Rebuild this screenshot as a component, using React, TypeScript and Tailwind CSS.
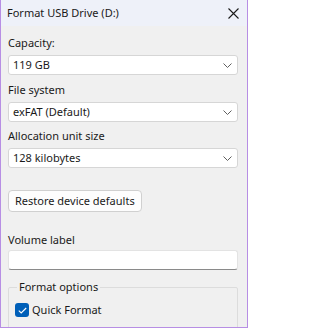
import React from "react";

const font = { fontFamily: '"Noto Sans", "Open Sans", sans-serif' };

function Chevron() {
  return (
    <svg width="9" height="5" viewBox="0 0 9 5" className="shrink-0">
      <path d="M0.5 0.5 L4.5 4.5 L8.5 0.5" fill="none" stroke="#5f5f5f" strokeWidth="1" />
    </svg>
  );
}

function Select({ value }: { value: string }) {
  return (
    <div className="h-[20px] w-[230px] bg-white border border-[#d6d6d6] rounded-[3px] flex items-center justify-between pl-[4px] pr-[5px] text-[11px] leading-[16px] text-[#1a1a1a]">
      <span>{value}</span>
      <Chevron />
    </div>
  );
}

function Label({ text, className }: { text: string; className?: string }) {
  return <div className={"h-[16px] text-[11px] leading-[16px] text-[#1a1a1a] " + (className ?? "")}>{text}</div>;
}

export default function App() {
  return (
    <div
      className="w-[248px] h-[328px] bg-[#f0f0f0] border-l border-r border-b border-[#b78ee4] overflow-hidden flex flex-col"
      style={font}
    >
      <div className="h-[26px] shrink-0 bg-[#eef1f9] flex items-center justify-between pl-[6px] pr-[8px]">
        <span className="text-[11px] leading-[16px] text-[#1a1a1a]">Format USB Drive (D:)</span>
        <svg width="11" height="11" viewBox="0 0 11 11">
          <path d="M0.5 0.5 L10.5 10.5 M10.5 0.5 L0.5 10.5" stroke="#1a1a1a" strokeWidth="1.1" fill="none" />
        </svg>
      </div>
      <div className="flex flex-col pl-[7px]">
        <Label text="Capacity:" className="mt-[9px]" />
        <div className="mt-[4px]"><Select value="119 GB" /></div>
        <Label text="File system" className="mt-[7px]" />
        <div className="mt-[4px]"><Select value="exFAT (Default)" /></div>
        <Label text="Allocation unit size" className="mt-[6px]" />
        <div className="mt-[4px]"><Select value="128 kilobytes" /></div>
        <div className="mt-[19px]">
          <button className="h-[22px] px-[6px] bg-[#fdfdfd] border border-[#d0d0d0] rounded-[4px] text-[11px] leading-[16px] text-[#1a1a1a]" style={font}>
            Restore device defaults
          </button>
        </div>
        <Label text="Volume label" className="mt-[20px]" />
        <div className="mt-[2px] h-[20px] w-[230px] bg-white border border-[#e3e3e3] border-b-[#8a8a8a] rounded-[3px]" />
        <fieldset className="mt-[9px] w-[230px] h-[60px] border border-[#dcdcdc] rounded-[2px] px-[6px]">
          <legend className="ml-[2px] px-[2px] text-[11px] leading-[16px] text-[#1a1a1a]">Format options</legend>
          <div className="flex items-center mt-[7px] gap-[3px]">
            <div className="w-[14px] h-[14px] rounded-[3px] bg-[#005fb8] flex items-center justify-center">
              <svg width="9" height="7" viewBox="0 0 9 7">
                <path d="M0.8 3.6 L3.2 6 L8.2 1" fill="none" stroke="#ffffff" strokeWidth="1.1" />
              </svg>
            </div>
            <span className="text-[11px] leading-[16px] text-[#1a1a1a]">Quick Format</span>
          </div>
        </fieldset>
      </div>
    </div>
  );
}
